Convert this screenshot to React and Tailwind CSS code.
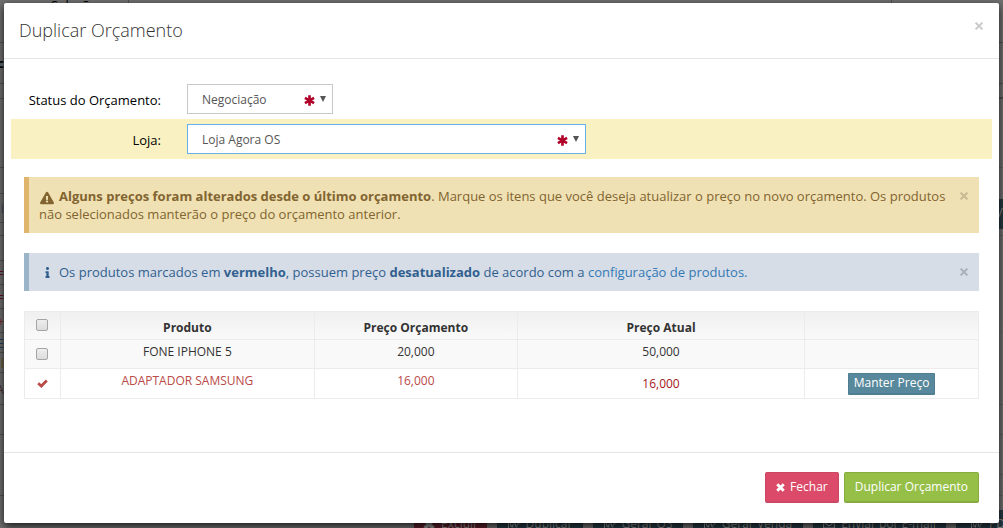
import React from "react";
import { FaInfo, FaExclamationTriangle, FaRegEnvelope, FaRegShareSquare } from "react-icons/fa";

function HeavyCross({ className }) {
  return (
    <svg viewBox="0 0 10 10" className={className} fill="none" stroke="currentColor" strokeWidth="3.2">
      <path d="M1.4 1.4L8.6 8.6M8.6 1.4L1.4 8.6" />
    </svg>
  );
}

function Asterisk({ className }) {
  return (
    <svg viewBox="0 0 12 12" className={className} fill="none" stroke="currentColor" strokeWidth="2.9">
      <path d="M6 0.3V11.7M1 3.2L11 8.8M11 3.2L1 8.8" />
    </svg>
  );
}

function HeavyCheck({ className }) {
  return (
    <svg viewBox="0 0 12 10" className={className} fill="none" stroke="currentColor" strokeWidth="3">
      <path d="M1.2 4.6L4.7 7.8L10.8 1.6" />
    </svg>
  );
}

const actions = [
  { label: "Excluir", Icon: HeavyCross, width: "w-[73px]", color: "bg-[#5c1f2c]" },
  { label: "Duplicar", Icon: FaRegShareSquare, width: "w-[86px]", color: "bg-[#253943]" },
  { label: "Gerar OS", Icon: FaRegShareSquare, width: "w-[90px]", color: "bg-[#253943]" },
  { label: "Gerar Venda", Icon: FaRegShareSquare, width: "w-[110px]", color: "bg-[#253943]" },
  { label: "Enviar por E-mail", Icon: FaRegEnvelope, width: "w-[133px]", color: "bg-[#253943]" },
  { label: "PDF", Icon: FaRegShareSquare, width: "w-[70px]", color: "bg-[#253943]" },
];

const leftRows = [
  { height: "h-[43px]" },
  { height: "h-[41px]", text: "c", color: "font-bold text-black" },
  { height: "h-[15px]" },
  { height: "h-[69px]" },
  { height: "h-[26px]" },
  { height: "h-[29px]", text: "li", color: "text-[#3c4a5a]" },
  { height: "h-[13px]" },
  { height: "h-[25px]" },
  { height: "h-6", text: "=", color: "text-[#5f1022]" },
  { height: "h-6", text: "=", color: "text-[#5f1022]" },
  { height: "h-6", text: "+", color: "text-[#7a2a20]" },
  { height: "h-5", text: "E", color: "text-[#23405c]" },
  { height: "h-5", text: "el", color: "text-[#6e5a20]" },
  { height: "h-8", text: "A", color: "text-[#4a3030]" },
  { height: "h-[30px]" },
  { height: "h-[61px]" },
];

function Backdrop() {
  return (
    <div aria-hidden="true" className="absolute inset-0 flex overflow-hidden bg-[#707070] text-[13px]">
      <div className="flex w-1 shrink-0 flex-col overflow-hidden">
        {leftRows.map(({ height, text, color }, index) => (
          <div key={index} className={`flex shrink-0 items-center justify-end border-b border-[#555] ${height} ${color ?? ""}`}>
            {text}
          </div>
        ))}
      </div>
      <div className="flex min-w-0 flex-1 flex-col">
        <div className="flex h-[43px] shrink-0 border-b border-[#505050]">
          <div className="w-[125px] border-r border-[#505050] pl-[47px]">
            <div className="-mt-1 leading-[18px] text-black">Seleção</div>
          </div>
          <div className="flex-1" />
          <div className="w-[112px] border-l border-[#505050]" />
        </div>
        <div className="h-[41px] shrink-0 border-b border-[#505050]" />
        <div className="h-[15px] shrink-0 border-b-2 border-[#505050]" />
        <div className="h-[69px] shrink-0 border-b border-[#5f5f5f]" />
        <div className="flex h-[68px] shrink-0 justify-end border-b border-[#5f5f5f] pt-[31px]">
          <div className="h-[30px] w-2 bg-[#253943] pt-1 text-[#858585]">V</div>
        </div>
        <div className="h-[97px] shrink-0 border-b border-[#686868]" />
        <div className="h-[72px] shrink-0 border-b border-[#5f5f5f]" />
        <div className="h-[30px] shrink-0 border-b border-[#5f5f5f]" />
        <div className="h-10 shrink-0 border-b border-[#5f5f5f]" />
        <div className="h-[21px] shrink-0 border-b border-[#5f5f5f]" />
        <div className="mt-[14px] flex gap-[10px] pl-[410px] text-[12px]">
          {actions.map(({ label, Icon, width, color }) => (
            <div
              key={label}
              className={`flex h-7 shrink-0 items-center justify-center gap-[6px] whitespace-nowrap text-[#909090] ${width} ${color}`}
            >
              <Icon className="size-3" />
              {label}
            </div>
          ))}
        </div>
      </div>
    </div>
  );
}

function CloseButton({ label, className }) {
  return (
    <button type="button" aria-label={label} className={`flex size-4 shrink-0 items-center justify-center ${className}`}>
      <svg viewBox="0 0 8 8" className="size-2" fill="none" stroke="currentColor" strokeWidth="2">
        <path d="M0.6 0.6L7.4 7.4M7.4 0.6L0.6 7.4" />
      </svg>
    </button>
  );
}

function SelectField({ id, label, value, width, highlighted }) {
  return (
    <div className={`flex h-10 items-center ${highlighted ? "bg-[#f9f1c1]" : ""}`}>
      <label htmlFor={id} className="w-[150px] pt-[2px] text-right text-black">
        {label}
      </label>
      <div className={`relative ml-[26px] ${width}`}>
        <select
          id={id}
          className={`block h-[30px] w-full appearance-none border bg-white pt-[2px] pl-[14px] text-[12px] text-[#555] outline-none ${
            highlighted ? "border-[#66afe9]" : "border-[#c8c8c8]"
          }`}
        >
          <option>{value}</option>
        </select>
        <span className="pointer-events-none absolute inset-y-0 right-[7px] flex items-center gap-[5px]">
          <Asterisk className="mt-[3px] size-[11px] text-[#b00029]" />
          <svg viewBox="0 0 6 6" className="size-[6px] fill-[#555]">
            <path d="M0 0H6L3 6Z" />
          </svg>
        </span>
      </div>
    </div>
  );
}

function TickBox({ label }) {
  return (
    <input
      type="checkbox"
      aria-label={label}
      className="mx-auto block size-3 appearance-none rounded-[2px] border border-[#a5a5a5] bg-linear-to-b from-[#eeeeee] to-[#dcdcdc] checked:bg-[#428bca]"
    />
  );
}

export default function App() {
  return (
    <div className="relative min-h-screen px-1 pt-[3px] pb-[5px] font-['Open_Sans',sans-serif] text-[13px] leading-[18px] text-[#333]">
      <Backdrop />
      <div
        role="dialog"
        aria-labelledby="dialog-title"
        className="relative rounded-[2px] bg-white shadow-[0_3px_9px_rgba(0,0,0,0.8)]"
      >
        <header className="flex items-start justify-between border-b border-[#e5e5e5] pt-[15px] pr-3 pb-4 pl-[15px]">
          <h1 id="dialog-title" className="text-[18px] leading-6 font-light">
            Duplicar Orçamento
          </h1>
          <CloseButton label="Fechar janela" className="text-[#cccccc]" />
        </header>

        <main className="px-5 pt-5 pb-[53px]">
          <form className="-mx-[13px]">
            <SelectField id="status" label="Status do Orçamento:" value="Negociação" width="w-[146px]" />
            <SelectField id="store" label="Loja:" value="Loja Agora OS" width="w-[399px]" highlighted />
          </form>

          <div className="mt-[18px] flex items-start gap-2 border-l-[5px] border-[#dfb56c] bg-[#efe1b3] py-[10px] pr-[7px] pl-[10px] text-[#826430]">
            <p className="flex-1">
              <FaExclamationTriangle className="mr-[5px] ml-px inline size-[14px] align-text-bottom" />
              <strong>Alguns preços foram alterados desde o último orçamento</strong>. Marque os itens que você deseja
              atualizar o preço no novo orçamento. Os produtos não selecionados manterão o preço do orçamento anterior.
            </p>
            <CloseButton label="Dispensar alerta" className="mt-px text-[#c8bb93]" />
          </div>

          <div className="mt-5 flex items-start gap-2 border-l-[5px] border-[#9bb4c8] bg-[#d6dde7] py-[10px] pr-[7px] pl-[10px] text-[#31608f]">
            <p className="flex-1">
              <FaInfo className="mr-[6px] mb-[2px] ml-[3px] inline size-[11px]" />
              Os produtos marcados em <strong>vermelho</strong>, possuem preço <strong>desatualizado</strong> de acordo
              com a{" "}
              <a href="#produtos" className="text-[#3379b5]">
                configuração de produtos.
              </a>
            </p>
            <CloseButton label="Dispensar aviso" className="mt-px text-[#abb1b9]" />
          </div>

          <table className="mt-5 w-full table-fixed border-collapse text-center text-[12px] [&_td]:border [&_td]:border-[#ececec] [&_th]:border [&_th]:border-[#ececec]">
            <colgroup>
              <col className="w-[36px]" />
              <col className="w-[26.6%]" />
              <col className="w-[21.3%]" />
              <col className="w-[30.1%]" />
              <col />
            </colgroup>
            <thead>
              <tr className="h-7 bg-linear-to-b from-[#f0f0f0] to-[#fafafa]">
                <th className="pr-px pb-px">
                  <TickBox label="Selecionar todos" />
                </th>
                <th className="pt-1">Produto</th>
                <th className="pt-1">Preço Orçamento</th>
                <th className="pt-1">Preço Atual</th>
                <th />
              </tr>
            </thead>
            <tbody>
              <tr className="h-[29px] bg-[#f9f9f9]">
                <td className="pr-px pb-px">
                  <TickBox label="Selecionar FONE IPHONE 5" />
                </td>
                <td className="pb-1">FONE IPHONE 5</td>
                <td className="pb-1">20,000</td>
                <td className="pb-1">50,000</td>
                <td />
              </tr>
              <tr className="h-[30px] text-[#b94a48]">
                <td>
                  <HeavyCheck className="mx-auto h-[9px] w-[11px]" />
                </td>
                <td className="pb-[6px]">ADAPTADOR SAMSUNG</td>
                <td className="pb-[6px]">16,000</td>
                <td className="text-[#a4161a]">16,000</td>
                <td>
                  <button
                    type="button"
                    className="h-[22px] rounded-[1px] border border-b-2 border-[#4f7d92] bg-[#57889c] px-[5px] align-middle text-[12px] leading-[18px] text-white"
                  >
                    Manter Preço
                  </button>
                </td>
              </tr>
            </tbody>
          </table>
        </main>

        <footer className="flex justify-end gap-[5px] border-t border-[#e5e5e5] px-5 pt-[19px] pb-5 text-[12px]">
          <button
            type="button"
            className="flex h-[31px] items-center gap-[5px] rounded-[2px] border border-b-2 border-[#cb4763] bg-[#db4b69] px-[10px] text-white"
          >
            <HeavyCross className="size-[9px]" />
            Fechar
          </button>
          <button
            type="button"
            className="h-[31px] rounded-[2px] border border-b-2 border-[#87ab3e] bg-[#96bf48] px-[10px] text-white"
          >
            Duplicar Orçamento
          </button>
        </footer>
      </div>
    </div>
  );
}
